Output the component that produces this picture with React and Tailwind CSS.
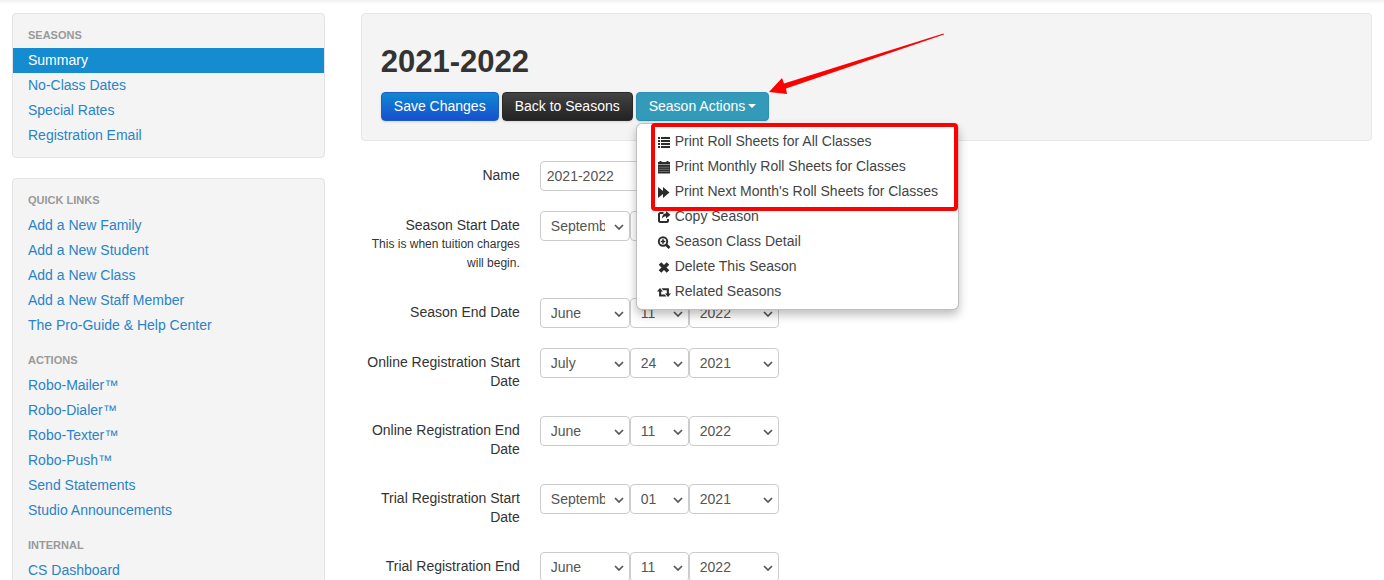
import { useState } from "react"

const seasonLinks = ["Summary", "No-Class Dates", "Special Rates", "Registration Email"]

const linkGroups = [
  {
    title: "Quick Links",
    links: [
      "Add a New Family",
      "Add a New Student",
      "Add a New Class",
      "Add a New Staff Member",
      "The Pro-Guide & Help Center",
    ],
  },
  {
    title: "Actions",
    links: [
      "Robo-Mailer™",
      "Robo-Dialer™",
      "Robo-Texter™",
      "Robo-Push™",
      "Send Statements",
      "Studio Announcements",
    ],
  },
  { title: "Internal", links: ["CS Dashboard"] },
]

const dateRows = [
  {
    id: "season-start",
    label: "Season Start Date",
    help: "This is when tuition charges will begin.",
    value: ["September", "01", "2021"],
  },
  { id: "season-end", label: "Season End Date", value: ["June", "11", "2022"] },
  { id: "online-start", label: "Online Registration Start Date", value: ["July", "24", "2021"] },
  { id: "online-end", label: "Online Registration End Date", value: ["June", "11", "2022"] },
  { id: "trial-start", label: "Trial Registration Start Date", value: ["September", "01", "2021"] },
  { id: "trial-end", label: "Trial Registration End Date", value: ["June", "11", "2022"] },
]

const months = [
  "January", "February", "March", "April", "May", "June",
  "July", "August", "September", "October", "November", "December",
]
const days = Array.from({ length: 31 }, (_, i) => String(i + 1).padStart(2, "0"))
const years = ["2020", "2021", "2022", "2023"]

const icons = {
  list: (
    <path d="M1 2h2v2H1zM4 2h9v2H4zM1 5h2v2H1zM4 5h9v2H4zM1 8h2v2H1zM4 8h9v2H4zM1 11h2v2H1zM4 11h9v2H4z" />
  ),
  calendar: (
    <>
      <path d="M2.5 1h2v1h5V1h2v1H13v2.4H1V2h1.500z" />
      <path d="M1 5h12v8.500H1z" />
      <path d="M1.500 7.200h11M1.500 9.300h11M1.500 11.400h11" stroke="#999" strokeWidth="0.6" />
    </>
  ),
  forward: <path d="M1 2l5 4V2l6.500 5.500L6 13V9l-5 4z" />,
  share: (
    <>
      <path
        d="M6.500 3H3.500Q2 3 2 4.500v6Q2 12 3.500 12h6Q11 12 11 10.500V9"
        fill="none"
        stroke="currentColor"
        strokeWidth="2"
      />
      <path d="M9 1l4.500 3.700L9 8.400V6.200C7 6.200 6 7 5 8.800 5 5.500 6.500 3.400 9 3.300z" />
    </>
  ),
  zoom: (
    <>
      <circle cx="6" cy="6.500" r="4.200" fill="none" stroke="currentColor" strokeWidth="1.900" />
      <path d="M5.200 4.200h1.600v1.500h1.500v1.600H6.800v1.500H5.200V7.300H3.700V5.700h1.500z" />
      <path d="M9 9.500l3.500 3.500" stroke="currentColor" strokeWidth="2.600" />
    </>
  ),
  remove: <path d="M3 3.500l8 8M11 3.500l-8 8" stroke="currentColor" strokeWidth="3.600" />,
  retweet: (
    <>
      <path d="M3 3l3 3.600H4.200v3h3.600l1.600 2H2.100v-5H0z" />
      <path d="M11 12L8 8.400h1.800V5.200H6.200L4.600 3.200h7.300v5.200H14z" />
    </>
  ),
}

const menuItems = [
  { icon: "list", label: "Print Roll Sheets for All Classes" },
  { icon: "calendar", label: "Print Monthly Roll Sheets for Classes" },
  { icon: "forward", label: "Print Next Month's Roll Sheets for Classes" },
  { icon: "share", label: "Copy Season" },
  { icon: "zoom", label: "Season Class Detail" },
  { icon: "remove", label: "Delete This Season" },
  { icon: "retweet", label: "Related Seasons" },
]

function NavGroup({ title, links, active }) {
  return (
    <div>
      <h2 className="px-[15px] text-[11px] leading-[25px] font-bold text-[#999] uppercase">{title}</h2>
      <ul>
        {links.map((link) => (
          <li key={link}>
            <a
              href="#"
              className={`block px-[15px] leading-[25px] ${
                link === active ? "bg-[#158cd0] text-white" : "text-[#2a83c8] hover:underline"
              }`}
            >
              {link}
            </a>
          </li>
        ))}
      </ul>
    </div>
  )
}

function DateSelect({ label, options, value, className }) {
  const [current, setCurrent] = useState(value)
  return (
    <div className={`relative ${className}`}>
      <select
        aria-label={label}
        value={current}
        onChange={(e) => setCurrent(e.target.value)}
        className="h-[30px] w-full appearance-none rounded border border-[#ccc] bg-white pr-6 pl-2.5 text-[#555]"
      >
        {options.map((option) => (
          <option key={option}>{option}</option>
        ))}
      </select>
      <svg
        width="10"
        height="6"
        viewBox="0 0 10 6"
        fill="none"
        stroke="#555"
        strokeWidth="1.700"
        className="pointer-events-none absolute top-3 right-1.5 mt-px"
      >
        <path d="M1 1l4 4 4-4" />
      </svg>
    </div>
  )
}

function FormRow({ label, help, children }) {
  return (
    <div role="group" className="flex items-start gap-5">
      <div className="w-[159px] shrink-0 py-[5px] text-right leading-[19px]">
        {label}
        {help && <p className="text-xs leading-[19px]">{help}</p>}
      </div>
      <div className="flex">{children}</div>
    </div>
  )
}

function ActionsMenu() {
  const [open, setOpen] = useState(true)
  return (
    <div className="relative">
      <button
        type="button"
        aria-expanded={open}
        onClick={() => setOpen(!open)}
        className="flex h-[29px] items-center gap-[3px] rounded border border-[#2f8fae] bg-[#339bb9] px-3 pb-px text-white shadow-sm"
      >
        Season Actions
        <svg width="8" height="4" viewBox="0 0 8 4" fill="currentColor">
          <path d="M0 0h8L4 4z" />
        </svg>
      </button>

      {open && (
        <div className="absolute top-full left-0 z-10 mt-0.5 rounded-md border border-black/25 bg-white py-[5px] shadow-[0_5px_10px_rgba(0,0,0,0.25)]">
          <ul>
            {menuItems.map((item) => (
              <li key={item.label}>
                <a
                  href="#"
                  className="flex items-center gap-1 px-5 leading-[25px] whitespace-nowrap text-[#444] hover:bg-gray-100"
                >
                  <svg width="14" height="14" viewBox="0 0 14 14" fill="currentColor" className="shrink-0 text-[#2b2b2b]">
                    {icons[item.icon]}
                  </svg>
                  {item.label}
                </a>
              </li>
            ))}
          </ul>
          {/* Highlight around the print options */}
          <div className="pointer-events-none absolute -top-px right-0 left-3.5 h-[88px] rounded border-4 border-[#fe0000]" />
        </div>
      )}

      {/* Pointer to the button */}
      <svg
        width="178"
        height="64"
        viewBox="0 0 178 64"
        fill="#fe0000"
        className="pointer-events-none absolute bottom-[25px] left-[132px]"
      >
        <path d="M1 60L14 46L16 51.500L175.500 1.400L176 2.400L18 56.500L19 62z" />
      </svg>
    </div>
  )
}

export default function App() {
  const [name, setName] = useState("2021-2022")

  return (
    <div className="h-screen overflow-hidden bg-white font-['Liberation_Sans',Arial,sans-serif] text-sm text-[#333]">
      <div className="h-1 bg-linear-to-b from-[#f1f1f1] to-white" />
      <div className="flex items-start gap-9 px-3 pt-[9px]">
        {/* Sidebar */}
        <nav className="flex w-[23%] shrink-0 flex-col gap-5">
          <div className="rounded border border-[#e3e3e3] bg-[#f4f4f4] py-[9px]">
            <NavGroup title="Seasons" links={seasonLinks} active="Summary" />
          </div>
          <div className="flex flex-col gap-2.5 rounded border border-[#e3e3e3] bg-[#f4f4f4] py-[9px]">
            {linkGroups.map((group) => (
              <NavGroup key={group.title} title={group.title} links={group.links} />
            ))}
          </div>
        </nav>

        {/* Content */}
        <main className="min-w-0 flex-1">
          <header className="rounded border border-[#e6e6e6] bg-[#f4f4f4] px-[19px] pt-7 pb-[19px]">
            <h1 className="text-[31px] leading-10 font-bold">2021-2022</h1>
            <div className="mt-2.5 flex gap-[3px]">
              <button
                type="submit"
                form="season-form"
                className="h-[29px] rounded border border-[#1a5fc4] bg-linear-to-b from-[#1287d0] to-[#1a4ed0] px-3 pb-px text-white shadow-sm"
              >
                Save Changes
              </button>
              <button
                type="button"
                className="h-[29px] rounded border border-[#2a2a2a] bg-linear-to-b from-[#434343] to-[#232323] px-3 pb-px text-white shadow-sm"
              >
                Back to Seasons
              </button>
              <ActionsMenu />
            </div>
          </header>

          <form id="season-form" className="mt-5 flex flex-col gap-5" onSubmit={(e) => e.preventDefault()}>
            <FormRow label={<label htmlFor="season-name">Name</label>}>
              <input
                id="season-name"
                type="text"
                value={name}
                onChange={(e) => setName(e.target.value)}
                className="h-[30px] w-[220px] rounded border border-[#ccc] px-1.5 text-[#555]"
              />
            </FormRow>
            {dateRows.map(({ id, label, help, value }) => (
              <FormRow key={id} label={label} help={help}>
                <DateSelect label={`${label} month`} options={months} value={value[0]} className="w-[90px]" />
                <DateSelect label={`${label} day`} options={days} value={value[1]} className="w-[59px]" />
                <DateSelect label={`${label} year`} options={years} value={value[2]} className="w-[90px]" />
              </FormRow>
            ))}
          </form>
        </main>
      </div>
    </div>
  )
}
